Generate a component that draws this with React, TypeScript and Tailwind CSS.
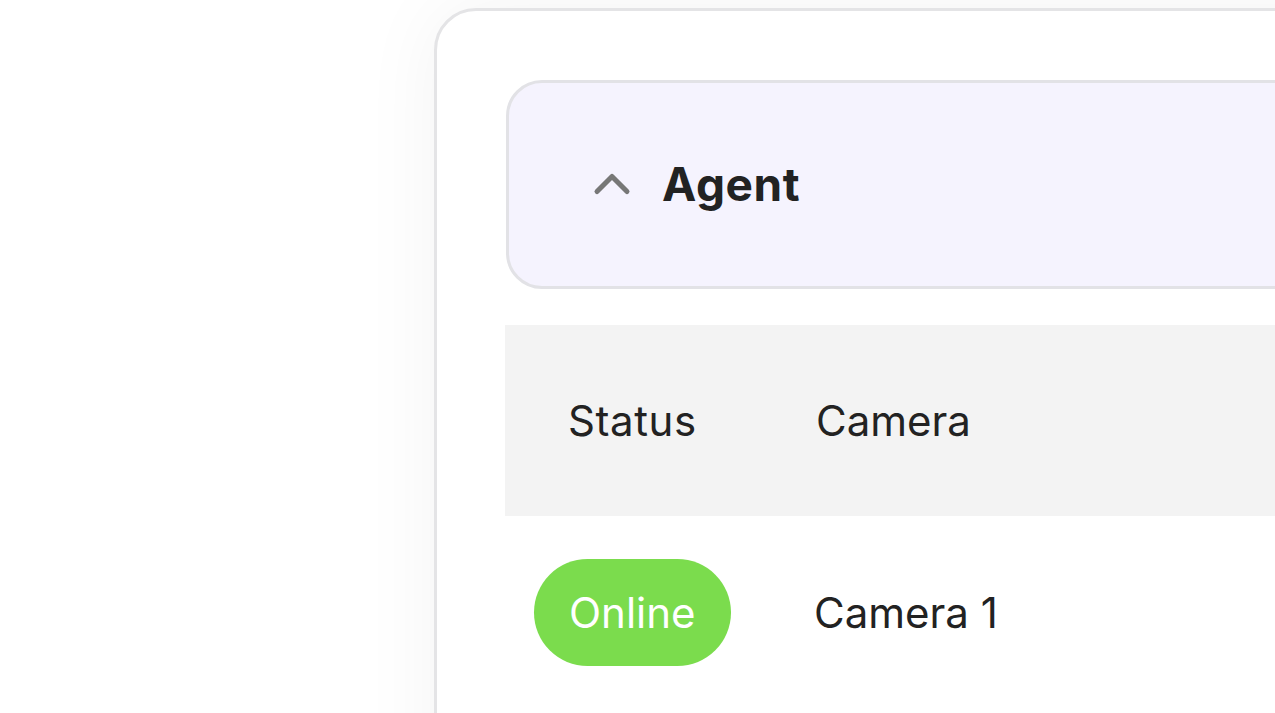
import React from 'react';
import { ChevronUp } from 'lucide-react';

const rows = [{ status: 'Online', camera: 'Camera 1' }];

export default function App() {
  return (
    <div className="h-[713px] w-[1275px] overflow-hidden bg-white font-['Inter',sans-serif] text-[#222222]">
      <div className="ml-[434px] mt-[8px] w-[1000px] h-[900px] rounded-[42px] border-[3px] border-[#e4e4e6] bg-white p-[69px] shadow-[0_0_80px_rgba(0,0,0,0.05)]">
        {/* Section header */}
        <div className="flex h-[209px] items-center rounded-[36px] border-[3px] border-[#e2e2e6] bg-[#f5f3fe] pl-[73px]">
          <ChevronUp size={60} strokeWidth={2} className="text-[#777777] shrink-0 -mt-[2px]" />
          <span className="ml-[20px] text-[46px] font-bold tracking-[0.6px]">Agent</span>
        </div>

        {/* Table */}
        <div className="mt-[36px] -ml-[1px]">
          <div className="flex h-[191px] items-center bg-[#f3f3f3] text-[42px]">
            <div className="w-[248px] pl-[63px] tracking-[0.6px]">Status</div>
            <div className="pl-[63px]">Camera</div>
          </div>
          {rows.map(r => (
            <div key={r.camera} className="flex items-center pt-[43px] text-[42px]">
              <div className="w-[248px] pl-[29px]">
                <span className="inline-flex h-[107px] items-center rounded-full bg-[#7bdc4d] px-[35px] text-white">{r.status}</span>
              </div>
              <div className="pl-[61px]">{r.camera}</div>
            </div>
          ))}
        </div>
      </div>
    </div>
  );
}
